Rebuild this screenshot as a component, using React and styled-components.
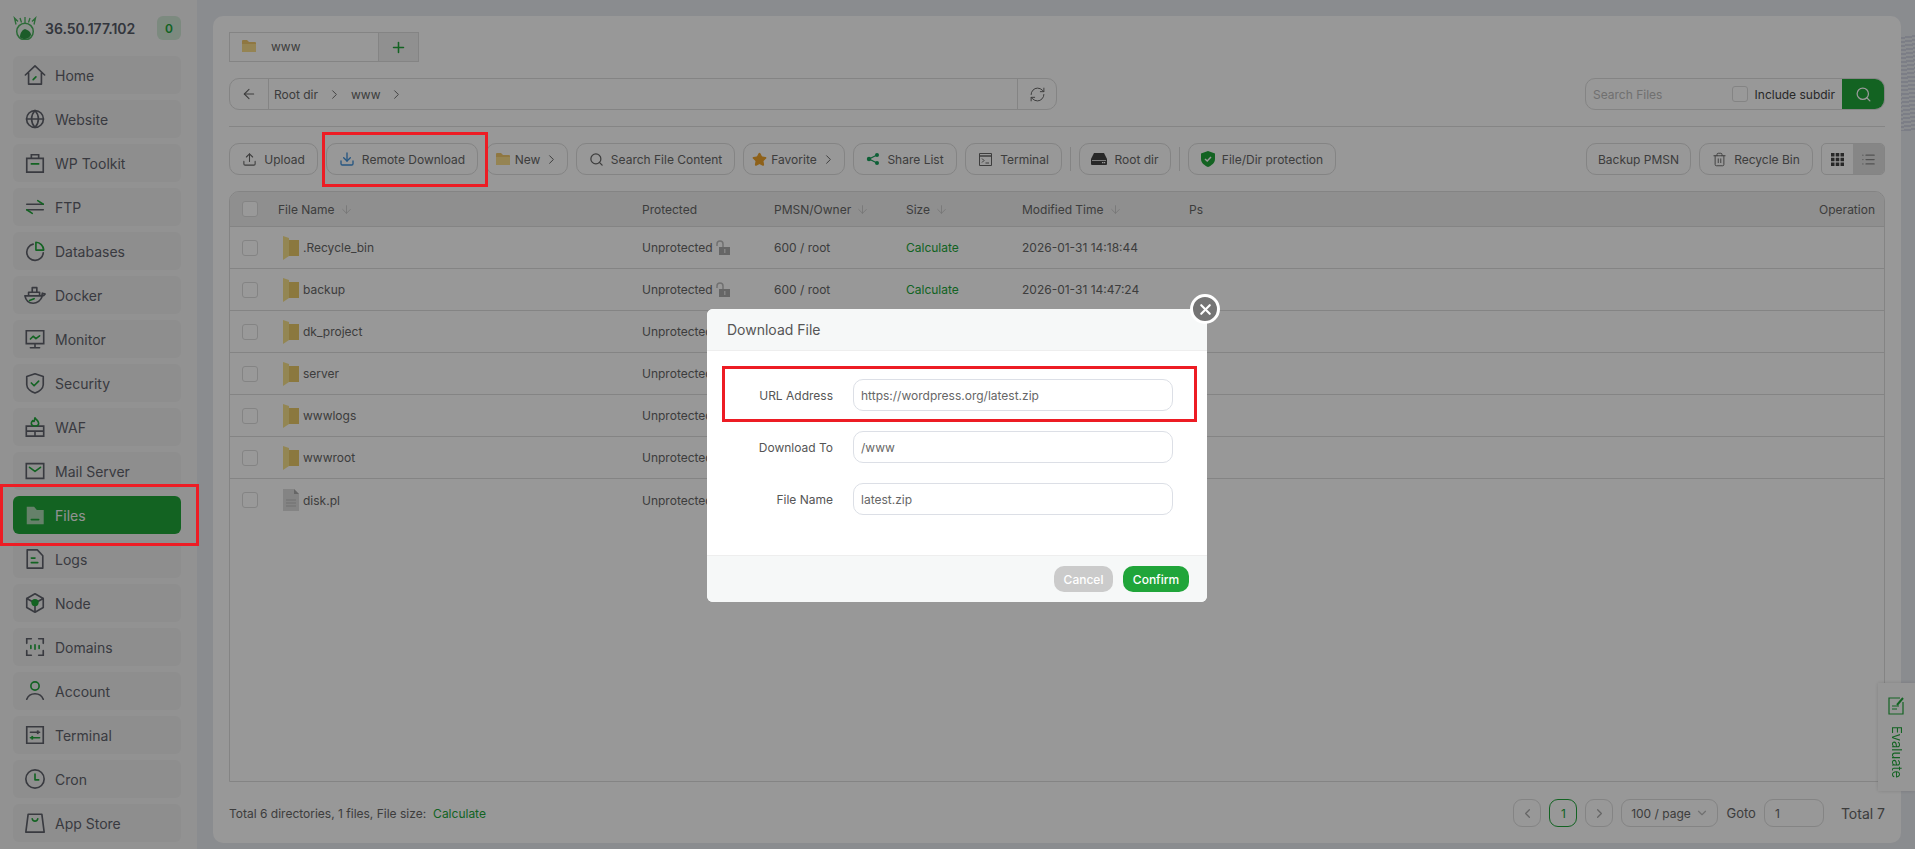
import React from 'react';
import styled, { createGlobalStyle } from 'styled-components';
import { Upload, Download, Search, Star, Plus, ArrowLeft, ChevronRight, ChevronLeft, ChevronDown, ArrowDown, RefreshCw, Trash2, X, List } from 'lucide-react';

const GREEN = '#20a53a';
const INK = '#5f626b';

const Global = createGlobalStyle`
  html, body { margin: 0; padding: 0; height: 100%; overflow: hidden; }
  body { font-family: Inter, "Noto Sans", "Liberation Sans", sans-serif; color: #666; background: #e6e9ef; }
  * { box-sizing: border-box; }
`;

const Page = styled.div`
  display: flex;
  width: 100vw;
  height: 100vh;
  background:
    repeating-linear-gradient(172deg, #e6e9ef 0 2px, #cfd2e0 2px 4px) right 35px / 14px 96px no-repeat,
    #e6e9ef;
`;
const Sidebar = styled.aside`
  width: 197px;
  flex: none;
  background: #f3f3f3;
  padding: 16px 16px 0 13px;
  display: flex;
  flex-direction: column;
  gap: 6px;
`;
const Brand = styled.div`
  display: flex;
  align-items: center;
  height: 24px;
  margin-bottom: 10px;
  gap: 8px;
`;
const BrandIp = styled.div`
  flex: 1;
  font-size: 14px;
  font-weight: 600;
  color: #555a66;
  white-space: nowrap;
`;
const Badge = styled.div`
  width: 24px;
  height: 24px;
  border-radius: 6px;
  background: #cfe6d4;
  color: ${GREEN};
  font-size: 12px;
  font-weight: 600;
  display: flex;
  align-items: center;
  justify-content: center;
`;
const NavItem = styled.div`
  height: 38px;
  flex: none;
  border-radius: 6px;
  background: ${p => (p.$active ? GREEN : '#ededed')};
  color: ${p => (p.$active ? '#f4f4f4' : INK)};
  display: flex;
  align-items: center;
  padding-left: 11px;
  gap: 9px;
  font-size: 14px;
  svg { flex: none; }
`;
const Main = styled.main`
  flex: 1;
  min-width: 0;
  padding: 16px 14px 6px 16px;
  display: flex;
`;
const Panel = styled.section`
  flex: 1;
  min-width: 0;
  background: #fdfdfd;
  border-radius: 10px;
  padding: 16px 16px 0;
  display: flex;
  flex-direction: column;
`;
const TabBar = styled.div`
  display: flex;
  height: 30px;
`;
const Tab = styled.div`
  width: 150px;
  border: 1px solid #dcdcdc;
  display: flex;
  align-items: center;
  padding: 0 0 2px 11px;
  gap: 14px;
  font-size: 12px;
  color: #666;
`;
const TabAdd = styled.div`
  width: 40px;
  border: 1px solid #dcdcdc;
  border-left: 0;
  background: #f0f0f0;
  display: flex;
  align-items: center;
  justify-content: center;
  color: ${GREEN};
`;
const PathRow = styled.div`
  display: flex;
  justify-content: space-between;
  margin-top: 16px;
  padding-bottom: 16px;
  border-bottom: 1px solid #dedede;
`;
const Crumbs = styled.div`
  width: 828px;
  height: 32px;
  border: 1px solid #dcdcdc;
  border-radius: 10px;
  display: flex;
  align-items: stretch;
  font-size: 12px;
  color: #666;
`;
const CrumbBack = styled.div`
  width: 39px;
  border-right: 1px solid #dcdcdc;
  display: flex;
  align-items: center;
  justify-content: center;
`;
const CrumbPath = styled.div`
  flex: 1;
  display: flex;
  align-items: center;
  padding-left: 5px;
  gap: 9px;
`;
const CrumbRefresh = styled.div`
  width: 39px;
  border-left: 1px solid #dcdcdc;
  display: flex;
  align-items: center;
  justify-content: center;
`;
const SearchBox = styled.div`
  width: 300px;
  height: 32px;
  border: 1px solid #dcdcdc;
  border-radius: 10px;
  display: flex;
  align-items: center;
  padding-left: 7px;
  overflow: hidden;
  font-size: 12px;
`;
const SearchHint = styled.span`
  flex: 1;
  color: #bbb;
`;
const Check = styled.span`
  width: 16px;
  height: 16px;
  border: 1px solid #dcdcdc;
  border-radius: 3px;
  background: #fff;
  display: inline-block;
  flex: none;
`;
const SearchLabel = styled.span`
  margin-left: 7px;
  margin-right: 7px;
  color: #444;
  white-space: nowrap;
`;
const SearchBtn = styled.div`
  width: 42px;
  height: 32px;
  background: ${GREEN};
  color: #fff;
  display: flex;
  align-items: center;
  justify-content: center;
  flex: none;
`;
const Toolbar = styled.div`
  display: flex;
  align-items: center;
  gap: 8px;
  margin-top: 16px;
  height: 32px;
`;
const Spacer = styled.div`flex: 1;`;
const Btn = styled.div`
  width: ${p => p.$w}px;
  height: 32px;
  border: 1px solid #dcdcdc;
  border-radius: 10px;
  display: flex;
  align-items: center;
  justify-content: center;
  gap: ${p => p.$gap ?? 7}px;
  font-size: 12px;
  color: #666;
  white-space: nowrap;
  flex: none;
`;
const Sep = styled.div`
  width: 1px;
  height: 24px;
  background: #dcdcdc;
`;
const ViewToggle = styled.div`
  width: 64px;
  height: 32px;
  border: 1px solid #dcdcdc;
  border-radius: 5px;
  display: flex;
  overflow: hidden;
`;
const ViewCell = styled.div`
  flex: 1;
  display: flex;
  align-items: center;
  justify-content: center;
  background: ${p => (p.$on ? '#e0e0e0' : 'transparent')};
  color: ${p => (p.$on ? '#888' : '#444')};
`;
const Table = styled.div`
  flex: 1;
  margin-top: 16px;
  border: 1px solid #dcdcdc;
  border-radius: 10px 10px 0 0;
  overflow: hidden;
`;
const Row = styled.div`
  display: grid;
  grid-template-columns: 48px 364px 132px 132px 116px 167px 1fr 120px;
  align-items: center;
  height: ${p => (p.$head ? '35px' : '42px')};
  background: ${p => (p.$head ? '#eeeeee' : 'transparent')};
  border-bottom: ${p => (p.$last ? '0' : '1px solid #dcdcdc')};
  font-size: 12px;
  color: #666;
`;
const CheckCell = styled.div`
  padding-left: 12px;
  display: flex;
`;
const HeadCell = styled.div`
  display: flex;
  align-items: center;
  gap: 5px;
  justify-content: ${p => (p.$end ? 'flex-end' : 'flex-start')};
  padding-right: ${p => (p.$end ? '9px' : '0')};
`;
const NameCell = styled.div`
  display: flex;
  align-items: center;
  padding-left: 5px;
  gap: 4px;
`;
const ProtCell = styled.div`
  display: flex;
  align-items: center;
  gap: 3px;
`;
const Calc = styled.span`
  color: ${GREEN};
`;
const Footer = styled.div`
  height: 61px;
  flex: none;
  display: flex;
  align-items: center;
  justify-content: space-between;
  font-size: 12px;
  color: #666;
  padding-top: 1px;
`;
const FootLeft = styled.div`
  display: flex;
  gap: 7px;
`;
const Pager = styled.div`
  display: flex;
  align-items: center;
  gap: 8px;
`;
const PageBtn = styled.div`
  width: 28px;
  height: 28px;
  border: 1px solid ${p => (p.$on ? GREEN : '#dcdcdc')};
  border-radius: 9px;
  color: ${p => (p.$on ? GREEN : '#aaa')};
  display: flex;
  align-items: center;
  justify-content: center;
  font-size: 12px;
`;
const PageSelect = styled.div`
  width: 97px;
  height: 28px;
  border: 1px solid #dcdcdc;
  border-radius: 9px;
  display: flex;
  align-items: center;
  justify-content: center;
  gap: 4px;
  white-space: nowrap;
`;
const GotoLabel = styled.span`
  font-size: 13px;
`;
const GotoInput = styled.div`
  width: 60px;
  height: 28px;
  border: 1px solid #dcdcdc;
  border-radius: 9px;
  display: flex;
  align-items: center;
  padding-left: 10px;
`;
const TotalLabel = styled.span`
  margin-left: 9px;
  font-size: 14px;
`;
const Evaluate = styled.div`
  position: fixed;
  right: 0;
  top: 683px;
  width: 37px;
  height: 108px;
  background: #fbfbfb;
  box-shadow: 0 0 4px rgba(0, 0, 0, .15);
  display: flex;
  flex-direction: column;
  align-items: center;
  padding-top: 13px;
  gap: 11px;
  color: ${GREEN};
  font-size: 13px;
`;
const EvaluateText = styled.span`
  writing-mode: vertical-rl;
`;
const Overlay = styled.div`
  position: fixed;
  inset: 0;
  background: rgba(0, 0, 0, .4);
  z-index: 10;
`;
const Marker = styled.div`
  position: fixed;
  left: ${p => p.$x}px;
  top: ${p => p.$y}px;
  width: ${p => p.$w}px;
  height: ${p => p.$h}px;
  border: 3px solid #ed1c24;
  z-index: 25;
`;
const Dialog = styled.div`
  position: fixed;
  left: 707px;
  top: 309px;
  width: 500px;
  height: 293px;
  background: #fff;
  border-radius: 6px;
  z-index: 20;
  display: flex;
  flex-direction: column;
`;
const DialogHead = styled.div`
  height: 42px;
  flex: none;
  background: #f6f8f8;
  border-bottom: 1px solid #eee;
  border-radius: 6px 6px 0 0;
  display: flex;
  align-items: center;
  padding-left: 20px;
  font-size: 14px;
  color: #555;
`;
const CloseBtn = styled.div`
  position: absolute;
  right: -13px;
  top: -15px;
  width: 30px;
  height: 30px;
  border-radius: 50%;
  border: 3px solid #fff;
  background: #757575;
  color: #fff;
  display: flex;
  align-items: center;
  justify-content: center;
`;
const DialogBody = styled.div`
  flex: 1;
  padding-top: 28px;
  display: flex;
  flex-direction: column;
  gap: 20px;
`;
const Field = styled.div`
  display: flex;
  align-items: center;
`;
const FieldLabel = styled.label`
  width: 126px;
  text-align: right;
  font-size: 12px;
  color: #555;
  padding-top: 1px;
`;
const FieldInput = styled.div`
  width: 320px;
  height: 32px;
  margin-left: 20px;
  border: 1px solid #dcdfe6;
  border-radius: 10px;
  display: flex;
  align-items: center;
  padding-left: 7px;
  font-size: 12px;
  color: #666;
`;
const DialogFoot = styled.div`
  height: 47px;
  flex: none;
  background: #f6f8f8;
  border-top: 1px solid #eee;
  border-radius: 0 0 6px 6px;
  display: flex;
  justify-content: flex-end;
  align-items: center;
  gap: 10px;
  padding-right: 18px;
`;
const DlgBtn = styled.div`
  width: ${p => p.$w}px;
  height: 26px;
  border-radius: 10px;
  background: ${p => (p.$primary ? GREEN : '#cbcbcb')};
  color: #fff;
  font-size: 12px;
  font-weight: 500;
  display: flex;
  align-items: center;
  justify-content: center;
`;

const S = { fill: 'none', stroke: INK, strokeWidth: 1.8 };
const G = { fill: 'none', stroke: GREEN, strokeWidth: 1.8 };
const Ico = ({ children, size = 22 }) => (
  <svg width={size} height={size} viewBox="0 0 24 24" strokeLinecap="round" strokeLinejoin="round">{children}</svg>
);

const icons = {
  Home: <><path {...S} d="M1.5 12 12 2l10.5 10M5 10v12h14V10" /><path {...G} d="m10 17 3-3" /></>,
  Website: <><circle {...S} cx="12" cy="12" r="9.2" /><path {...S} d="M2.8 12h18.4M12 2.8c-5 5.5-5 12.900 0 18.400M12 2.800c5 5.500 5 12.900 0 18.400" /></>,
  'WP Toolkit': <><path {...S} d="M3 7h18v15H3zM8 7V3h8v4" strokeLinejoin="miter" /><path {...G} d="M8 13h8" /></>,
  FTP: <><path {...S} d="M3 9h18M3 15h18" /><path {...G} d="m15 5 6 4M3 15l6 4" /></>,
  Databases: <><path {...S} d="M10 4.500A9 9 0 1 0 21 14" /><path {...G} d="M13 2.500V11h8.500A9 9 0 0 0 13 2.500z" /></>,
  Docker: <><path {...S} d="M1 13h17c1 0 2-1.500 2-3 1 .5 2 .5 3 1-1 1.500-2 2-3 2-1.500 5-6 8-10 8-5 0-8-3-9-8zM5 13V9h12v4M9 9V4h5v5" /><path {...G} d="m6 18 5-2" /></>,
  Monitor: <><path {...S} d="M2.500 3h19v14h-19zM12 17v4M7 21.500h10" strokeLinejoin="miter" /><path {...G} d="m7 12 3-3 3 2.500 4-3" /></>,
  Security: <><path {...S} d="M12 2 21 5v9c0 4-5 7.500-9 9-4-1.500-9-5-9-9V5z" /><path {...G} d="m8 12 3 3 5-5" /></>,
  WAF: <><path {...S} d="M2.500 11h19v11h-19zM2.500 16.500h19M12 16.500V22" strokeLinejoin="miter" /><path {...G} d="M12 2c1 2 4 3 4 6 0 1.500-1 3-4 3s-4-1.500-4-3c0-1.500 1-2.500 1.500-3 .5 1 1 1 1.500 1 .5-1 .5-2.500 1-4z" /></>,
  'Mail Server': <><path {...S} d="M2.500 4h19v16h-19z" strokeLinejoin="miter" /><path {...G} d="m6 8 6 4.500L18 8" /></>,
  Logs: <><path {...S} d="M3.500 2h11l6 6.500V22h-17z" /><path {...G} d="M8 11h4M8 16h7" /></>,
  Node: <><path {...S} d="M12 2 21 7v10l-9 5-9-5V7zM3 7l9 5 9-5M12 12v10" /><circle cx="12" cy="11.500" r="4" fill={GREEN} /></>,
  Domains: <><path {...S} d="M8 3H3v5M16 3h5v5M8 21H3v-5M16 21h5v-5" strokeLinejoin="miter" /><path {...G} d="M7.500 10.500v3M12 9.500v5M16.500 10.500v3" /></>,
  Account: <><circle {...G} cx="12" cy="6.500" r="4.500" /><path {...S} d="M3 21c1.500-4 5-6 9-6s7.500 2 9 6" /></>,
  Terminal: <><path {...S} d="M3 3h18v18H3z" strokeLinejoin="miter" /><path {...S} d="M7 9h10" /><path {...G} d="M7 15h10" /><path fill={INK} d="M14 7h2v4h-2z" /><path fill={GREEN} d="M8 13h2v4H8z" /></>,
  Cron: <><circle {...S} cx="12" cy="12" r="10" /><path {...G} d="M12 6.500V13h4" /></>,
  'App Store': <><path {...S} d="M4.500 2.500h15L22 22H2z" /><path {...G} d="M9 7.500c.5 2 1.500 2.500 3 2.500s2.500-.5 3-2.500" /></>,
};

const NAV = ['Home', 'Website', 'WP Toolkit', 'FTP', 'Databases', 'Docker', 'Monitor', 'Security', 'WAF', 'Mail Server', 'Files', 'Logs', 'Node', 'Domains', 'Account', 'Terminal', 'Cron', 'App Store'];

const FilesIcon = () => (
  <Ico>
    <path fill="#d8e8da" opacity=".75" d="M3 3h8l3 3.500h7.500V22H3z" />
    <path stroke={GREEN} strokeWidth="1.800" d="M8 17h8" />
  </Ico>
);

const Logo = () => (
  <svg width="24" height="24" viewBox="0 0 24 24">
    <circle cx="12" cy="15.500" r="8.300" fill="#e8f2ea" stroke="#4bb35e" strokeWidth="1.500" />
    <path fill="#2f9a45" d="M7 21c0-4 2-7 5-8 3 1 6 3 6 6-2 3-4 4-6 4s-4-.5-5-2z" />
    <path stroke="#4bb35e" strokeWidth="1.300" fill="none" d="M3 8.500 1.500 2l3.500 3.500M12 7.500V1M8.500 6.500 7 2M15.500 6.500 17 2M21 8.500 22.500 2 19 5.500" />
  </svg>
);

const Folder = ({ w = 16, h = 16 }) => (
  <svg width={w} height={h} viewBox="0 0 16 16">
    <path fill="#eec76d" d="M1 3a1 1 0 0 1 1-1h4l2 2h6a1 1 0 0 1 1 1v8a1 1 0 0 1-1 1H2a1 1 0 0 1-1-1z" />
    <path fill="#f9dc8a" d="M1 6h14v7a1 1 0 0 1-1 1H2a1 1 0 0 1-1-1z" />
  </svg>
);
const RowFolder = () => (
  <svg width="16" height="24" viewBox="0 0 16 24" style={{ flex: 'none' }}>
    <path fill="#e8c968" d="M5 4h11v16H5z" />
    <path fill="#f6e08a" d="M0 0l6 2v18l-6 4z" />
  </svg>
);
const RowFile = () => (
  <svg width="16" height="22" viewBox="0 0 16 22" style={{ flex: 'none' }}>
    <path fill="#dcdcdc" d="M0 0h11l5 5v17H0z" />
    <path fill="#aaa" d="M11 0l5 5h-5z" />
    <path stroke="#bbb" d="M3 11h10M3 14h10M3 17h10" />
  </svg>
);
const LockOpen = () => (
  <svg width="14" height="15" viewBox="0 0 14 15">
    <path fill="none" stroke="#bbb" strokeWidth="1.500" d="M1 6V4a3 3 0 0 1 6 0v3" />
    <path fill="#aaa" d="M3 7h11v8H3z" />
    <path fill="#ddd" d="M8 9h1.500v4H8z" />
  </svg>
);
const Sort = () => <ArrowDown size={13} color="#c4c4c4" strokeWidth={1.5} />;

const HEAD = ['File Name', 'Protected', 'PMSN/Owner', 'Size', 'Modified Time', 'Ps'];
const FILES = [
  ['.Recycle_bin', '600 / root', 'Calculate', '2026-01-31 14:18:44', true],
  ['backup', '600 / root', 'Calculate', '2026-01-31 14:47:24', true],
  ['dk_project', '', '', '', true],
  ['server', '', '', '', true],
  ['wwwlogs', '', '', '', true],
  ['wwwroot', '', '', '', true],
  ['disk.pl', '', '', '', false],
];

export default function App() {
  return (
    <>
      <Global />
      <Page>
        <Sidebar>
          <Brand>
            <Logo />
            <BrandIp>36.50.177.102</BrandIp>
            <Badge>0</Badge>
          </Brand>
          {NAV.map(n => (
            <NavItem key={n} $active={n === 'Files'}>
              {n === 'Files' ? <FilesIcon /> : <Ico>{icons[n]}</Ico>}
              {n}
            </NavItem>
          ))}
        </Sidebar>
        <Main>
          <Panel>
            <TabBar>
              <Tab><Folder />www</Tab>
              <TabAdd><Plus size={17} strokeWidth={2.2} /></TabAdd>
            </TabBar>
            <PathRow>
              <Crumbs>
                <CrumbBack><ArrowLeft size={16} strokeWidth={1.6} /></CrumbBack>
                <CrumbPath>
                  Root dir <ChevronRight size={15} strokeWidth={1.5} /> www <ChevronRight size={15} strokeWidth={1.5} />
                </CrumbPath>
                <CrumbRefresh><RefreshCw size={17} strokeWidth={1.4} /></CrumbRefresh>
              </Crumbs>
              <SearchBox>
                <SearchHint>Search Files</SearchHint>
                <Check />
                <SearchLabel>Include subdir</SearchLabel>
                <SearchBtn><Search size={17} strokeWidth={1.8} /></SearchBtn>
              </SearchBox>
            </PathRow>
            <Toolbar>
              <Btn $w={89}><Upload size={15} strokeWidth={1.7} />Upload</Btn>
              <Btn $w={152}><Download size={16} strokeWidth={2} color="#3f8fd8" />Remote Download</Btn>
              <Btn $w={82} $gap={4}><Folder />New<ChevronRight size={15} strokeWidth={1.6} /></Btn>
              <Btn $w={159}><Search size={15} strokeWidth={2} />Search File Content</Btn>
              <Btn $w={102} $gap={4}><Star size={15} fill="#eda22b" color="#eda22b" />Favorite<ChevronRight size={15} strokeWidth={1.6} /></Btn>
              <Btn $w={104}>
                <svg width="14" height="14" viewBox="0 0 14 14"><path stroke="#17a05a" strokeWidth="1.300" d="M3 7l8-4M3 7l8 4" /><circle cx="3" cy="7" r="2.200" fill="#17a05a" /><circle cx="11" cy="3" r="2" fill="#17a05a" /><circle cx="11" cy="11" r="2" fill="#17a05a" /></svg>
                Share List
              </Btn>
              <Btn $w={97}>
                <svg width="15" height="15" viewBox="0 0 15 15" fill="none" stroke="#666"><path d="M1.500 1.500h12v12h-12z" /><path d="M1.500 4h12" strokeWidth="1.500" /><path d="m4 6.500 2 2-2 2M7.500 11H11" /></svg>
                Terminal
              </Btn>
              <Sep />
              <Btn $w={92}>
                <svg width="16" height="12" viewBox="0 0 16 12"><path fill="#444" d="M3 0h10l3 6v5a1 1 0 0 1-1 1H1a1 1 0 0 1-1-1V6z" /><path fill="#fff" d="M1 7h14v.7H1zM11 9h1.500v1.200H11zM13 9h1.200v1.200H13z" /></svg>
                Root dir
              </Btn>
              <Sep />
              <Btn $w={148}>
                <svg width="14" height="16" viewBox="0 0 14 16"><path fill={GREEN} d="M7 0l7 2.500V8c0 4-3.500 6.500-7 8-3.500-1.500-7-4-7-8V2.500z" /><path fill="none" stroke="#fff" strokeWidth="1.500" d="m4 8 2.200 2L10 6" /></svg>
                File/Dir protection
              </Btn>
              <Spacer />
              <Btn $w={105}>Backup PMSN</Btn>
              <Btn $w={114}><Trash2 size={15} strokeWidth={1.5} />Recycle Bin</Btn>
              <ViewToggle>
                <ViewCell>
                  <svg width="13" height="13" viewBox="0 0 13 13" fill="currentColor"><path d="M0 0h3.500v3.500H0zM4.700 0h3.600v3.500H4.700zM9.500 0H13v3.500H9.500zM0 4.700h3.500v3.600H0zM4.700 4.700h3.600v3.600H4.700zM9.500 4.700H13v3.600H9.500zM0 9.500h3.500V13H0zM4.700 9.500h3.600V13H4.700zM9.500 9.500H13V13H9.500z" /></svg>
                </ViewCell>
                <ViewCell $on><List size={15} /></ViewCell>
              </ViewToggle>
            </Toolbar>
            <Table>
              <Row $head>
                <CheckCell><Check /></CheckCell>
                {HEAD.map((h, i) => (
                  <HeadCell key={h}>{h}{![1, 5].includes(i) && <Sort />}</HeadCell>
                ))}
                <HeadCell $end>Operation</HeadCell>
              </Row>
              {FILES.map((f, i) => (
                <Row key={f[0]} $last={i === FILES.length - 1}>
                  <CheckCell><Check /></CheckCell>
                  <NameCell>{f[4] ? <RowFolder /> : <RowFile />}{f[0]}</NameCell>
                  <ProtCell>Unprotected {i < 2 && <LockOpen />}</ProtCell>
                  <div>{f[1]}</div>
                  <div>{f[2] && <Calc>{f[2]}</Calc>}</div>
                  <div>{f[3]}</div>
                  <div />
                  <div />
                </Row>
              ))}
            </Table>
            <Footer>
              <FootLeft>Total 6 directories, 1 files, File size: <Calc>Calculate</Calc></FootLeft>
              <Pager>
                <PageBtn><ChevronLeft size={15} /></PageBtn>
                <PageBtn $on>1</PageBtn>
                <PageBtn><ChevronRight size={15} /></PageBtn>
                <PageSelect>100 / page <ChevronDown size={14} color="#bbb" /></PageSelect>
                <GotoLabel>Goto</GotoLabel>
                <GotoInput>1</GotoInput>
                <TotalLabel>Total 7</TotalLabel>
              </Pager>
            </Footer>
          </Panel>
        </Main>
      </Page>
      <Evaluate>
        <svg width="17" height="19" viewBox="0 0 17 19" fill="none" stroke={GREEN} strokeWidth="1.200">
          <path d="M12 2H1v16h14V6" /><path d="M4 10h7M4 13h5" /><path d="m9 9 6-7" strokeWidth="2" />
        </svg>
        <EvaluateText>Evaluate</EvaluateText>
      </Evaluate>
      <Overlay />
      <Marker $x={0} $y={484} $w={199} $h={62} />
      <Marker $x={322} $y={132} $w={166} $h={55} />
      <Dialog>
        <CloseBtn><X size={17} strokeWidth={3} /></CloseBtn>
        <DialogHead>Download File</DialogHead>
        <DialogBody>
          <Field><FieldLabel>URL Address</FieldLabel><FieldInput>https://wordpress.org/latest.zip</FieldInput></Field>
          <Field><FieldLabel>Download To</FieldLabel><FieldInput>/www</FieldInput></Field>
          <Field><FieldLabel>File Name</FieldLabel><FieldInput>latest.zip</FieldInput></Field>
        </DialogBody>
        <DialogFoot>
          <DlgBtn $w={59}>Cancel</DlgBtn>
          <DlgBtn $w={66} $primary>Confirm</DlgBtn>
        </DialogFoot>
      </Dialog>
      <Marker $x={722} $y={366} $w={475} $h={56} />
    </>
  );
}
